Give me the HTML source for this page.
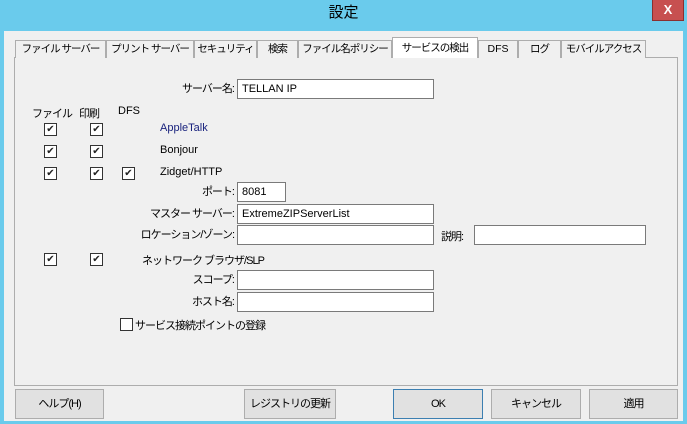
<!DOCTYPE html>
<html><head><meta charset="utf-8"><style>
*{box-sizing:border-box;margin:0;padding:0}
body{width:687px;height:424px;background:#6acbec;position:relative;overflow:hidden;font-family:"Liberation Sans","Noto Sans CJK JP",sans-serif;font-size:11px;color:#000}
.a{position:absolute;white-space:nowrap}
.j{letter-spacing:-1px}
#client{left:4px;top:31px;width:679px;height:390px;background:#f0f0f0}
.title{left:0;top:2px;width:687px;text-align:center;font-size:15px;line-height:22px}
.close{left:652px;top:0;width:32px;height:21px;background:#c75050;color:#fff;font-weight:bold;font-size:13px;text-align:center;line-height:20px;border:1px solid #8a3030;border-top:none}
.tab{top:40px;height:18px;border:1px solid #adadad;border-bottom:none;background:#f0f0f0;text-align:center;line-height:16px;font-size:10.5px;letter-spacing:-1px;overflow:hidden}
.tab.sel{top:37px;height:21px;background:#fff;z-index:2;line-height:20px}
#panel{left:14px;top:57px;width:664px;height:329px;border:1px solid #adadad;background:#f0f0f0}
.in{height:20px;border:1px solid #7a7a7a;background:#fff;padding-left:4px;line-height:18px;font-size:11px}
.lbl{text-align:right;line-height:20px;letter-spacing:-1px}
.cb{width:13px;height:13px;border:1px solid #333;background:#fff;font-size:10px;line-height:11px;text-align:center;color:#222}
.btn{top:389px;height:30px;border:1px solid #adadad;background:#e1e1e1;text-align:center;line-height:28px;font-size:11px;letter-spacing:-1px}
</style></head><body>
<div class="a title">設定</div>
<div class="a close">X</div>
<div class="a" id="client"></div>
<div class="a" id="panel"></div>
<div class="a tab" style="left:15px;width:91px">ファイル サーバー</div>
<div class="a tab" style="left:106px;width:88px">プリント サーバー</div>
<div class="a tab" style="left:194px;width:63px">セキュリティ</div>
<div class="a tab" style="left:257px;width:41px">検索</div>
<div class="a tab" style="left:298px;width:94px">ファイル名ポリシー</div>
<div class="a tab sel" style="left:392px;width:86px">サービスの検出</div>
<div class="a tab" style="left:478px;width:40px;letter-spacing:0">DFS</div>
<div class="a tab" style="left:518px;width:43px">ログ</div>
<div class="a tab" style="left:561px;width:85px">モバイルアクセス</div>

<div class="a lbl" style="left:130px;top:79px;width:104px">サーバー名:</div>
<div class="a in" style="left:237px;top:79px;width:197px">TELLAN IP</div>
<div class="a j" style="left:32px;top:105px">ファイル</div>
<div class="a j" style="left:79px;top:105px">印刷</div>
<div class="a" style="left:118px;top:105px">DFS</div>

<div class="a cb" style="left:44px;top:123px">✔</div><div class="a cb" style="left:90px;top:123px">✔</div>
<div class="a" style="left:160px;top:122px;color:#1a237e">AppleTalk</div>
<div class="a cb" style="left:44px;top:145px">✔</div><div class="a cb" style="left:90px;top:145px">✔</div>
<div class="a" style="left:160px;top:144px">Bonjour</div>
<div class="a cb" style="left:44px;top:167px">✔</div><div class="a cb" style="left:90px;top:167px">✔</div><div class="a cb" style="left:122px;top:167px">✔</div>
<div class="a" style="left:160px;top:166px">Zidget/HTTP</div>

<div class="a lbl" style="left:100px;top:182px;width:134px">ポート:</div>
<div class="a in" style="left:237px;top:182px;width:49px">8081</div>
<div class="a lbl" style="left:100px;top:204px;width:134px">マスター サーバー:</div>
<div class="a in" style="left:237px;top:204px;width:197px">ExtremeZIPServerList</div>
<div class="a lbl" style="left:100px;top:225px;width:134px">ロケーション/ゾーン:</div>
<div class="a in" style="left:237px;top:225px;width:197px"></div>
<div class="a j" style="left:441px;top:228px">説明:</div>
<div class="a in" style="left:474px;top:225px;width:172px"></div>

<div class="a cb" style="left:44px;top:253px">✔</div><div class="a cb" style="left:90px;top:253px">✔</div>
<div class="a j" style="left:142px;top:252px">ネットワーク ブラウザ/SLP</div>
<div class="a lbl" style="left:100px;top:270px;width:134px">スコープ:</div>
<div class="a in" style="left:237px;top:270px;width:197px"></div>
<div class="a lbl" style="left:100px;top:292px;width:134px">ホスト名:</div>
<div class="a in" style="left:237px;top:292px;width:197px"></div>
<div class="a cb" style="left:120px;top:318px"></div>
<div class="a j" style="left:135px;top:317px">サービス接続ポイントの登録</div>

<div class="a btn" style="left:15px;width:89px">ヘルプ(H)</div>
<div class="a btn" style="left:244px;width:92px">レジストリの更新</div>
<div class="a btn" style="left:393px;width:90px;border-color:#3c7fb1">OK</div>
<div class="a btn" style="left:491px;width:90px">キャンセル</div>
<div class="a btn" style="left:589px;width:89px">適用</div>
</body></html>
